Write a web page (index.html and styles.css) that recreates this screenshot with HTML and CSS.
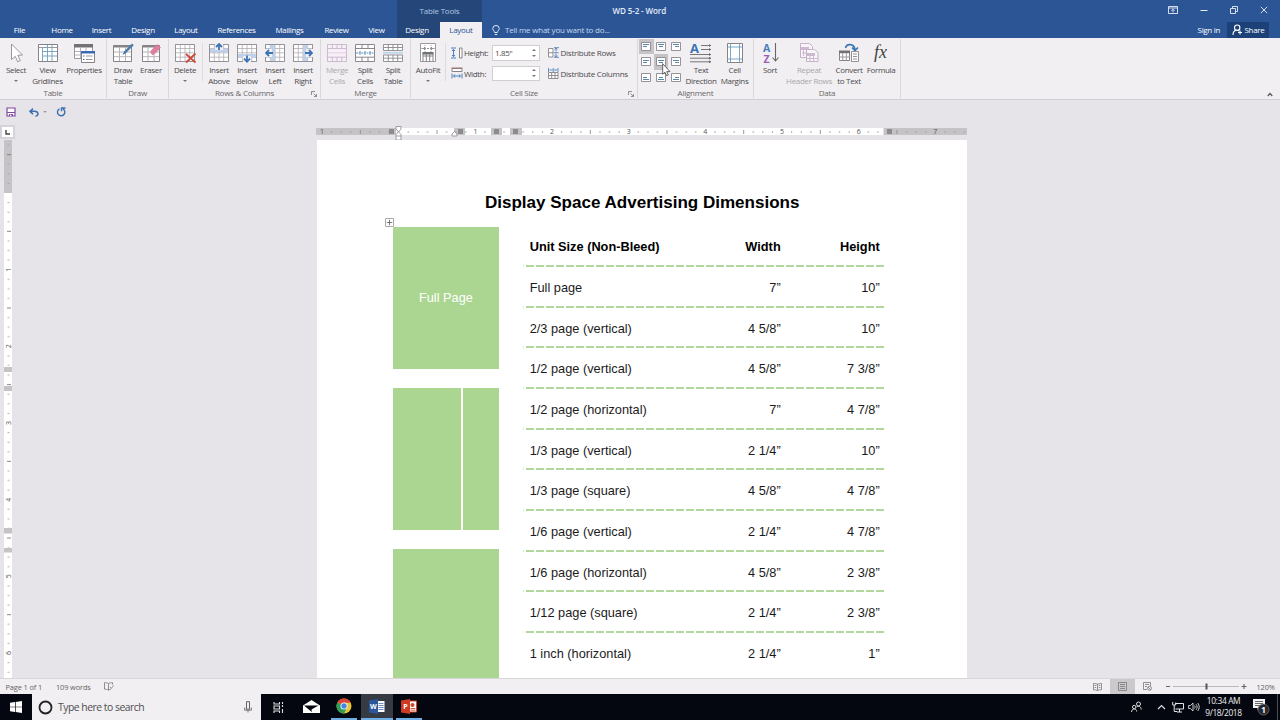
FILE: index.html
```html
<!DOCTYPE html>
<html lang="en">
<head>
<meta charset="UTF-8">
<meta name="viewport" content="width=device-width, initial-scale=1.0">
<title>WD 5-2 - Word</title>
<link rel="stylesheet" href="styles.css">
</head>
<body>

<!-- Shared icon parts -->
<svg class="defs" width="0" height="0">
<symbol id="grid" viewBox="0 0 20 20">
<path d="M.5 1.5h19v17H.5zM.5 5.5h19M.5 9.8h19M.5 14.2h19M5.3 1.5v17M10 1.5v17M14.7 1.5v17" fill="#fff" stroke="#aeacb0" stroke-width=".8"/>
<path d="M.5 1.5h19v17H.5z" fill="none" stroke="#959397"/>
</symbol>
<symbol id="launcher" viewBox="0 0 6 6"><path d="M.5 4V.5H4M2.5 2.5l3 3M5.5 3v2.5H3" fill="none" stroke="#777" stroke-width=".8"/></symbol>
</svg>

<!-- Title bar -->
<div class="titlebar">
<div class="context-title">Table Tools</div>
<div class="doc-name">WD 5-2 - Word</div>
<div class="window-buttons">
<svg width="10" height="8"><path d="M.5.5h9v7h-9zM.5 2h9M5 6.5V3.2M3.4 4.8L5 3.2l1.6 1.6" fill="none" stroke="#e6edf7" stroke-width=".9"/></svg>
<svg width="8" height="8"><path d="M.5 4.5h7" stroke="#e6edf7"/></svg>
<svg width="8" height="8"><path d="M.5 2.5h5v5h-5zM2.5 2.5v-2h5v5h-2" fill="none" stroke="#e6edf7" stroke-width=".9"/></svg>
<svg width="8" height="8"><path d="M.8.8l6.4 6.4M7.2.8L.8 7.2" stroke="#e6edf7" stroke-width=".9"/></svg>
</div>
</div>

<!-- Ribbon tabs -->
<div class="tabs">
<div class="tab tab-file">File</div>
<div class="tab tab-home">Home</div>
<div class="tab tab-insert">Insert</div>
<div class="tab tab-design">Design</div>
<div class="tab tab-layout">Layout</div>
<div class="tab tab-references">References</div>
<div class="tab tab-mailings">Mailings</div>
<div class="tab tab-review">Review</div>
<div class="tab tab-view">View</div>
<div class="tab tab-context">Design</div>
<div class="tab tab-active">Layout</div>
<div class="tell-me">
<svg width="8" height="11" viewBox="0 0 8 11"><path d="M2.6 7.5C2.6 6 .8 5.3.8 3.5a3.2 3 0 0 1 6.4 0C7.2 5.3 5.4 6 5.4 7.5zM2.8 9.5h2.4" fill="none" stroke="#dfe8f5" stroke-width="1"/></svg>
<span>Tell me what you want to do...</span>
</div>
<div class="sign-in">Sign in</div>
<div class="share">
<svg width="11" height="12" viewBox="0 0 11 12"><path d="M1 11c0-3 1.5-4.5 3.3-4.7M6 6.3l1 .8M8 6.5v4M6 8.5h4" fill="none" stroke="#fff" stroke-width="1.1"/><circle cx="5.2" cy="3.7" r="2.7" fill="none" stroke="#fff" stroke-width="1.1"/></svg>
<span>Share</span>
</div>
</div>

<!-- Ribbon -->
<div class="ribbon">

<div class="group group-table">
<div class="tools">
<div class="tool w32"><svg width="20" height="20"><path d="M5.5 1v15.5l3.7-3.2 2.5 5.5 2.6-1.2-2.4-5.3 4.6-.3z" fill="#fff" stroke="#808080" stroke-width=".8"/></svg><span>Select</span><i class="caret"></i></div>
<div class="tool w31"><svg width="20" height="20"><path d="M.5 1.5h19v17H.5z" fill="#fff" stroke="#858387"/><path d="M1 4.5h18" stroke="#9c9a9e"/><path d="M4.5 5v13.5M9.5 2v16.5M14 2v16.5M4 8.5h15M4 13h15" stroke="#6d9dc0" stroke-width=".9"/></svg><span>View<br>Gridlines</span></div>
<div class="tool w42"><svg width="22" height="20"><path d="M1.5 1.5h18v14h-18z" fill="#fff" stroke="#9a989b"/><path d="M1 1h19v3.5H1z" fill="#737174"/><path d="M2 8.5h17M2 12h17M7.5 4v11M13 4v11" stroke="#b5b3b6"/><path d="M8.5 8.5h13v11h-13z" fill="#fff" stroke="#858387"/><path d="M8 8h14v2.5H8z" fill="#3a6cb5"/><path d="M10 13h1.5M10 16.5h1.5" stroke="#3a6cb5"/><path d="M13 13h6.5M13 16.5h6.5" stroke="#999"/></svg><span>Properties</span></div>
</div>
<div class="group-name">Table</div>
</div>

<div class="group group-draw">
<div class="tools">
<div class="tool w28"><svg width="22" height="20"><path d="M1.5 2.5h18v16h-18z" fill="#fff" stroke="#858387"/><path d="M1.5 2.5h18v2h-18z" fill="#858387"/><path d="M2 9h17M2 13.7h17M7.5 4v14M13.5 4v14" stroke="#b5b3b6"/><path d="M10.5 12l1.5-3.5 8-8 1.8 1.8-8 8z" fill="#4c7dad"/></svg><span>Draw<br>Table</span></div>
<div class="tool w28"><svg width="20" height="20"><path d="M1.5 2.5h17v16h-17z" fill="#fff" stroke="#858387"/><path d="M1.5 2.5h17v2h-17z" fill="#858387"/><path d="M2 9h16M2 13.7h16M7 4v14M13 12v6" stroke="#b5b3b6"/><path d="M9.5 8.5l6.5-7 3.5 3-6.5 7h-2z" fill="#e07f9c" stroke="#d0708e" stroke-width=".6"/></svg><span>Eraser</span></div>
</div>
<div class="group-name">Draw</div>
</div>

<div class="group group-rows">
<div class="tools">
<div class="tool w28"><svg width="20" height="20" class="spill"><use href="#grid" width="20" height="20"/><path d="M11 11l9.5 8.5M20.5 10.5l-9.5 9" stroke="#cf4a3c" stroke-width="1.8"/></svg><span>Delete</span><i class="caret"></i></div>
<div class="divider"></div>
<div class="tool w28"><svg width="20" height="20"><use href="#grid" width="20" height="20"/><path d="M1 5.5h18v4H1z" fill="#bfd0ea"/><path d="M6 0h8v7H6z" fill="#f1eff2"/><path d="M10 7V1M7 4l3-3 3 3" fill="none" stroke="#3d74b5" stroke-width="1.8"/></svg><span>Insert<br>Above</span></div>
<div class="tool w28"><svg width="20" height="20"><use href="#grid" width="20" height="20"/><path d="M1 11h18v4H1z" fill="#bfd0ea"/><path d="M6 13h8v7H6z" fill="#f1eff2"/><path d="M10 12.5v6M7 15.7l3 3 3-3" fill="none" stroke="#3d74b5" stroke-width="1.8"/></svg><span>Insert<br>Below</span></div>
<div class="tool w28"><svg width="20" height="20"><use href="#grid" width="20" height="20"/><path d="M5.5 2h4.5v16H5.5z" fill="#bfd0ea"/><path d="M0 6h7v8H0z" fill="#f1eff2"/><path d="M8 10H1.2M4 7l-3 3 3 3" fill="none" stroke="#3d74b5" stroke-width="1.8"/></svg><span>Insert<br>Left</span></div>
<div class="tool w28"><svg width="20" height="20"><use href="#grid" width="20" height="20"/><path d="M10 2h4.5v16H10z" fill="#bfd0ea"/><path d="M13 6h7v8h-7z" fill="#f1eff2"/><path d="M12 10h6.8M16 7l3 3-3 3" fill="none" stroke="#3d74b5" stroke-width="1.8"/></svg><span>Insert<br>Right</span></div>
</div>
<div class="group-name">Rows &amp; Columns</div>
<svg class="launcher" width="6" height="6"><use href="#launcher"/></svg>
</div>

<div class="group group-merge">
<div class="tools">
<div class="tool w28 disabled"><svg width="20" height="20"><path d="M.5 1.5h19v17H.5zM.5 5.5h19M.5 14.2h19M5.3 1.5v4M10 1.5v4M14.7 1.5v4M5.3 14v4M10 14v4M14.7 14v4" fill="#f6eff6" stroke="#cdb9d1"/><path d="M.5 9.8h19" stroke="#e3cfe6"/></svg><span>Merge<br>Cells</span></div>
<div class="tool w28"><svg width="20" height="20"><path d="M.5 1.5h19v17H.5zM.5 5.5h19M.5 14.2h19M7 1.5v4M13 1.5v4M7 14v4M13 14v4" fill="#fff" stroke="#8a888c"/><path d="M5 8v4M10 8v4M15 8v4M1 10h18" stroke="#5b94bd" stroke-dasharray="2 .6"/></svg><span>Split<br>Cells</span></div>
<div class="tool w28"><svg width="20" height="20"><path d="M.5 1.5h19v6H.5zM.5 12h19v6.5H.5zM.5 4.5h19M.5 15.2h19M5.3 1.5v6M10 1.5v6M14.7 1.5v6M5.3 12v6.5M10 12v6.5M14.7 12v6.5" fill="#fff" stroke="#8a888c" stroke-width=".9"/><path d="M0 9.8h20" stroke="#b6d3ea" stroke-width="1.5"/></svg><span>Split<br>Table</span></div>
</div>
<div class="group-name">Merge</div>
</div>

<div class="group group-size">
<div class="tools">
<div class="tool w30"><svg width="20" height="20"><path d="M2.5.5h15v18h-15z" fill="#fff" stroke="#9a989b"/><path d="M7 2v7M13 2v7" stroke="#aaa" stroke-dasharray="1 1"/><path d="M3.5 5.5h4M6 4l1.5 1.5L6 7M16.5 5.5h-4M14 4l-1.5 1.5L14 7M9 5.5h2" fill="none" stroke="#777" stroke-width=".8"/><path d="M5 10h10v8.5M5 10v8.5M5 13h10M8.3 10v8.5M11.7 10v8.5" fill="none" stroke="#858387"/><path d="M4.5 9h11v2.5h-11z" fill="#737174"/></svg><span>AutoFit</span><i class="caret"></i></div>
<div class="divider divider-size"></div>
<div class="size-fields">
<div class="field"><svg width="12" height="12"><path d="M0 1h5M0 11h5M2.5 2.5v7M1 4l1.5-1.7L4 4M1 8l1.5 1.7L4 8" fill="none" stroke="#3d74b5" stroke-width=".9"/><path d="M8.5 1h2.5v10H8.5z" fill="#fff" stroke="#858387"/></svg><span class="field-name">Height:</span><div class="spinner"><span>1.85"</span><b class="arrows"><i class="up"></i><i class="down"></i></b></div></div>
<div class="field"><svg width="12" height="12"><path d="M1 1.5h10v3H1z" fill="#fff" stroke="#858387"/><path d="M.5 1h11" stroke="#a07070"/><path d="M1 6.5v5M11 6.5v5M2.5 9h7M4.2 7.5L2.5 9l1.7 1.5M7.8 7.5L9.5 9l-1.7 1.5" fill="none" stroke="#3d74b5" stroke-width=".9"/></svg><span class="field-name">Width:</span><div class="spinner"><span></span><b class="arrows"><i class="up"></i><i class="down"></i></b></div></div>
</div>
<div class="distribute">
<div class="dist-item"><svg width="11" height="11"><path d="M.5 1.5h4.5v8.5H.5zM.5 5.7H5" fill="#fff" stroke="#858387" stroke-width=".9"/><path d="M8 1v3.5M6.8 2.5L8 1.2l1.2 1.3M8 10V6.5M6.8 8.5L8 9.8l1.2-1.3M6 5.7h4.5M6 .7h5M6 10.3h5" fill="none" stroke="#3d74b5" stroke-width=".8"/></svg>Distribute Rows</div>
<div class="dist-item"><svg width="11" height="11"><path d="M.5 4.5h9.5v6H.5zM3.7 4.5v6M7 4.5v6M.5 7.5H10" fill="#fff" stroke="#858387" stroke-width=".9"/><path d="M.5 0v4M10 0v4M5.2 0v4M1.5 2h3M6 2h3" stroke="#3d74b5" stroke-width=".8"/></svg>Distribute Columns</div>
</div>
</div>
<div class="group-name">Cell Size</div>
<svg class="launcher" width="6" height="6"><use href="#launcher"/></svg>
</div>

<div class="group group-align">
<div class="tools">
<div class="align-grid">
<div class="align-btn selected"><svg width="10" height="9"><path d="M.5.5h9v8h-9z" fill="#fff" stroke="#8a888c" stroke-width=".9"/><path d="M2 2.5h6M2 4.5h4" stroke="#5a87a5"/></svg></div>
<div class="align-btn"><svg width="10" height="9"><path d="M.5.5h9v8h-9z" fill="#fff" stroke="#8a888c" stroke-width=".9"/><path d="M2 2.5h6M3 4.5h4" stroke="#5a87a5"/></svg></div>
<div class="align-btn"><svg width="10" height="9"><path d="M.5.5h9v8h-9z" fill="#fff" stroke="#8a888c" stroke-width=".9"/><path d="M2 2.5h6M4 4.5h4" stroke="#5a87a5"/></svg></div>
<div class="align-btn"><svg width="10" height="9"><path d="M.5.5h9v8h-9z" fill="#fff" stroke="#8a888c" stroke-width=".9"/><path d="M2 3.5h6M2 5.5h4" stroke="#5a87a5"/></svg></div>
<div class="align-btn selected"><svg width="10" height="9"><path d="M.5.5h9v8h-9z" fill="#fff" stroke="#8a888c" stroke-width=".9"/><path d="M2 3.5h6M3 5.5h4" stroke="#5a87a5"/></svg>
<svg class="cursor" width="9" height="14"><path d="M.7.7v10.5l2.3-2 1.6 3.5 1.7-.8-1.6-3.3h3.3z" fill="#fff" stroke="#444" stroke-width=".8"/></svg></div>
<div class="align-btn"><svg width="10" height="9"><path d="M.5.5h9v8h-9z" fill="#fff" stroke="#8a888c" stroke-width=".9"/><path d="M2 3.5h6M4 5.5h4" stroke="#5a87a5"/></svg></div>
<div class="align-btn"><svg width="10" height="9"><path d="M.5.5h9v8h-9z" fill="#fff" stroke="#8a888c" stroke-width=".9"/><path d="M2 4.5h4M2 6.5h6" stroke="#5a87a5"/></svg></div>
<div class="align-btn"><svg width="10" height="9"><path d="M.5.5h9v8h-9z" fill="#fff" stroke="#8a888c" stroke-width=".9"/><path d="M3 4.5h4M2 6.5h6" stroke="#5a87a5"/></svg></div>
<div class="align-btn"><svg width="10" height="9"><path d="M.5.5h9v8h-9z" fill="#fff" stroke="#8a888c" stroke-width=".9"/><path d="M4 4.5h4M2 6.5h6" stroke="#5a87a5"/></svg></div>
</div>
<div class="tool w34"><svg width="22" height="20" class="spill"><text x="0" y="9.5" class="letter-a">A</text><path d="M11 2.5h10M11 6.5h10M0 11.5h21M0 15.2h21M0 18.8h21" stroke="#68666a" stroke-width=".9"/><path d="M19 1l2 1.5L19 4zM19 5l2 1.5L19 8zM19 10l2 1.5-2 1.5zM19 13.7l2 1.5-2 1.5zM19 17.3l2 1.5-2 1.5z" fill="#68666a"/></svg><span>Text<br>Direction</span></div>
<div class="tool w33"><svg width="16" height="20"><path d="M.5.5h15v19H.5z" fill="#fff" stroke="#858387"/><path d="M3.5.5v19M12.5.5v19M.5 4h15M.5 16h15" stroke="#6d9dc0" stroke-width=".9"/></svg><span>Cell<br>Margins</span></div>
</div>
<div class="group-name">Alignment</div>
</div>

<div class="group group-data">
<div class="tools">
<div class="tool w28"><svg width="18" height="20" class="spill"><text x="2" y="9" class="sort-a">A</text><text x="2.5" y="19.5" class="sort-z">Z</text><path d="M14.5 0v18M11.5 14.5l3 3.5 3-3.5" fill="none" stroke="#68666a" stroke-width="1.1"/></svg><span>Sort</span></div>
<div class="tool w50 disabled"><svg width="20" height="20"><path d="M1.5.5h9l3 3v11h-12z" fill="#f8f4f8" stroke="#c5b2ca"/><path d="M2 4h8v3H2z" fill="#cdb9d1"/><path d="M4.5 4v9M7.5 4v9M3 10h7" stroke="#cdb9d1"/><path d="M7.5 6.5h8l3.5 3v9H7.5z" fill="#f8f4f8" stroke="#c5b2ca"/><path d="M8 10h8v3H8z" fill="#cdb9d1"/><path d="M11 10v8M14.5 10v8M8 15.5h11" stroke="#cdb9d1"/></svg><span>Repeat<br>Header Rows</span></div>
<div class="tool w30"><svg width="20" height="20"><path d="M6.5 5c1-4.5 8.5-5 9.5 1.5M13 4.5l3 3 3-3" fill="none" stroke="#3d74b5" stroke-width="1.6"/><path d="M.5 8.5h10v9H.5z" fill="#fff" stroke="#858387"/><path d="M0 7.5h11v2.7H0z" fill="#737174"/><path d="M3.7 10v7.5M7.3 10v7.5M.5 14h10" stroke="#999"/><path d="M12.5 8.5h7v10h-7zM14 11h4M14 13.5h4M14 16h4" fill="#fff" stroke="#858387" stroke-width=".9"/></svg><span>Convert<br>to Text</span></div>
<div class="tool w34"><svg width="20" height="20" class="spill"><text x="3" y="15" class="fx">fx</text></svg><span>Formula</span></div>
</div>
<div class="group-name">Data</div>
</div>

<svg class="collapse" width="6" height="5"><path d="M.7 4L3 1.5 5.3 4" fill="none" stroke="#555" stroke-width="1.2"/></svg>
</div>

<!-- Quick access -->
<div class="quick">
<svg width="10" height="10"><path d="M1 1h8v8H1z" fill="#fff" stroke="#8249a3" stroke-width="1.2"/><path d="M1 5h8v1H1zM3 7h4v2H3z" fill="#8249a3"/><path d="M4 7.5h1.3V9H4z" fill="#fff"/></svg>
<svg class="undo" width="10" height="9"><path d="M4 .6L1 3.3l3 2.8M1.2 3.3h4.5c4 0 4.3 4.6.8 4.9" fill="none" stroke="#3d6fb0" stroke-width="1.5"/></svg>
<i class="caret small"></i>
<svg class="redo" width="10" height="10"><path d="M3.5 1.8A3.7 3.7 0 1 0 7 1.9M5.5 4.3V1h4" fill="none" stroke="#3d6fb0" stroke-width="1.4"/></svg>
</div>

<!-- Horizontal ruler -->
<div class="ruler-row">
<div class="tab-stop"><svg width="5" height="5"><path d="M1 0v4h4" fill="none" stroke="#444" stroke-width="1.4"/></svg></div>
<svg class="ruler-h" width="651" height="16">
<defs><pattern id="ticks" x="6" y="0" width="76.67" height="16" patternUnits="userSpaceOnUse">
<path d="M9.6 6v2M19.2 6v2M28.8 6v2M47.9 6v2M57.5 6v2M67.1 6v2" stroke="#a5a3a6" stroke-width=".9"/><path d="M38.3 5v4" stroke="#8b898c" stroke-width=".9"/>
</pattern></defs>
<path d="M0 3h651v7H0z" fill="#fff"/>
<path d="M0 3h80v7H0zM138 3h11v7h-11zM175 3h11v7h-11zM194 3h12v7h-12zM567.5 3H651v7h-83.5z" fill="#c5c3c6"/>
<path d="M0 3h651v7H0z" fill="url(#ticks)"/>
<path d="M73 4h5v5h-5zM142 4h5v5h-5zM178 4h5v5h-5zM197 4h5v5h-5zM571 4h5v5h-5z" fill="#8d8b8e"/>
<g class="ruler-num"><text x="6" y="9">1</text><text x="159.5" y="9">1</text><text x="236" y="9">2</text><text x="312.7" y="9">3</text><text x="389.3" y="9">4</text><text x="466" y="9">5</text><text x="542.7" y="9">6</text><text x="619.3" y="9">7</text></g>
<path d="M80 1.500h5v2.500l-2.500 3-2.500-3zM80 10.500V9.500l2.500-2.700L85 9.500v5.500h-5zM80 11h5M136 11V9l2.500-2.500L141 9v2z" fill="#fff" stroke="#8b898c" stroke-width=".8"/>
</svg>
</div>

<!-- Document area -->
<div class="workspace">
<svg class="ruler-v" width="8" height="539">
<defs><pattern id="vticks" x="0" y="53" width="8" height="76.67" patternUnits="userSpaceOnUse">
<path d="M3.5 9.6h2M3.5 19.2h2M3.5 28.8h2M3.5 47.9h2M3.5 57.5h2M3.5 67.1h2" stroke="#a5a3a6" stroke-width=".9"/><path d="M3 38.3h4" stroke="#777" stroke-width=".9"/>
</pattern></defs>
<path d="M0 0h8v539H0z" fill="#fff"/>
<path d="M0 0h8v53H0zM0 227h8v5H0zM0 246h8v5H0zM0 388h8v5.5H0zM0 408h8v4.5H0z" fill="#c5c3c6"/>
<path d="M0 0h8v226H0zM0 232h8v14H0zM0 251h8v137H0zM0 394h8v14H0zM0 413h8v126H0z" fill="url(#vticks)"/>
<g class="ruler-num"><text transform="translate(6.5 129.7) rotate(-90)">1</text><text transform="translate(6.5 206.3) rotate(-90)">2</text><text transform="translate(6.5 283) rotate(-90)">3</text><text transform="translate(6.5 359.7) rotate(-90)">4</text><text transform="translate(6.5 436.3) rotate(-90)">5</text><text transform="translate(6.5 513) rotate(-90)">6</text></g>
</svg>

<div class="page">
<h1>Display Space Advertising Dimensions</h1>
<div class="content">
<svg class="move-handle" width="9" height="9"><path d="M.5.5h8v8h-8z" fill="#fff" stroke="#aaa"/><path d="M4.5 1.8v5.4M1.8 4.5h5.4" stroke="#666" stroke-width=".9"/></svg>
<div class="samples">
<div class="sample full">Full Page</div>
<div class="split"><div class="sample two-thirds"></div><div class="sample one-third"></div></div>
<div class="sample last"></div>
</div>
<div class="sizes">
<div class="row head"><span>Unit Size (Non-Bleed)</span><span>Width</span><span>Height</span></div>
<div class="row"><span>Full page</span><span>7”</span><span>10”</span></div>
<div class="row"><span>2/3 page (vertical)</span><span>4 5/8”</span><span>10”</span></div>
<div class="row"><span>1/2 page (vertical)</span><span>4 5/8”</span><span>7 3/8”</span></div>
<div class="row"><span>1/2 page (horizontal)</span><span>7”</span><span>4 7/8”</span></div>
<div class="row"><span>1/3 page (vertical)</span><span>2 1/4”</span><span>10”</span></div>
<div class="row"><span>1/3 page (square)</span><span>4 5/8”</span><span>4 7/8”</span></div>
<div class="row"><span>1/6 page (vertical)</span><span>2 1/4”</span><span>4 7/8”</span></div>
<div class="row"><span>1/6 page (horizontal)</span><span>4 5/8”</span><span>2 3/8”</span></div>
<div class="row"><span>1/12 page (square)</span><span>2 1/4”</span><span>2 3/8”</span></div>
<div class="row"><span>1 inch (horizontal)</span><span>2 1/4”</span><span>1”</span></div>
</div>
</div>
</div>
</div>

<!-- Status bar -->
<div class="status">
<span class="pages">Page 1 of 1</span>
<span class="words">109 words</span>
<svg width="10" height="9"><path d="M4.5 1.5C3 .7 2 .7.5.7v6.5c1.5 0 2.5 0 4 1zM4.5 1.5C6 .7 7 .7 8.5.7v2M4.5 8.2c1-.7 1.5-.9 2.3-1M6 5l1.2 1.5L9.5 3.5" fill="none" stroke="#777" stroke-width=".8"/></svg>
<div class="views">
<div class="view"><svg width="9" height="8"><path d="M4.5 1.2C3 .5 2 .5.5.5v6.3c1.500 0 2.500 0 4 .7 1.500-.7 2.500-.7 4-.7V.5c-1.500 0-2.500 0-4 .7zM4.500 1v6.500M1.700 2.500h1.500M1.700 4.500h1.500M5.800 2.500h1.500M5.800 4.500h1.500" fill="none" stroke="#777" stroke-width=".8"/></svg></div>
<div class="view current"><svg width="9" height="9"><path d="M.5.5h8v8h-8zM2 2.5h5M2 4.5h5M2 6.5h5" fill="none" stroke="#777" stroke-width=".8"/></svg></div>
<div class="view web"><svg width="9" height="9"><path d="M4 7.5H.5v-7h7V4M2 2.5h4M2 4.5h2" fill="none" stroke="#777" stroke-width=".8"/><circle cx="6.5" cy="6.3" r="2" fill="none" stroke="#777" stroke-width=".8"/><path d="M5 5l3 3" stroke="#777" stroke-width=".8"/></svg></div>
</div>
<svg class="zoom" width="80" height="9"><path d="M0 4.5h4M75.5 4.5h5M78 2v5" stroke="#666" stroke-width="1.1"/><path d="M7 4.5h66" stroke="#bbb"/><path d="M39.5 1.5h2v6h-2z" fill="#555"/></svg>
<span class="percent">120%</span>
</div>

<!-- Taskbar -->
<div class="taskbar">
<div class="start"><svg width="12" height="12"><path d="M0 1.7l5-.7v4.7H0zM5.700.9L12 0v5.700H5.700zM0 6.300h5V11l-5-.7zM5.700 6.300H12V12l-6.300-.9z" fill="#fff"/></svg></div>
<div class="search">
<svg width="15" height="15"><circle cx="7.5" cy="7.5" r="6" fill="none" stroke="#222" stroke-width="1.8"/></svg>
<span>Type here to search</span>
<svg class="mic" width="8" height="12"><path d="M2.5.7h3v7.5h-3z" fill="none" stroke="#555" stroke-width=".9"/><path d="M.7 6.5v2.7h6.6V6.5M4 9.5v2" fill="none" stroke="#555" stroke-width=".8"/></svg>
</div>
<div class="task"><svg width="11" height="11"><path d="M1 0v2h5.5V0M1 11V9h5.5v2M1 4h5.5v3H1zM9.5 0v2M9.5 3v2M9.5 7v4" fill="none" stroke="#ddd" stroke-width="1.1"/></svg></div>
<div class="task"><svg width="17" height="14"><path d="M0 5.5L8.5 0 17 5.5V13H0z" fill="#fff"/><path d="M1 5.5h14.5L8.5 9.500 8.800 12z" fill="#04070f"/></svg></div>
<div class="task running"><svg width="16" height="16" viewBox="0 0 16 16"><circle cx="8" cy="8" r="7.5" fill="#e8c533"/><path d="M8 8L1.5 4.25A7.5 7.5 0 0 0 8 15.5L11 9.5z" fill="#2d9d58"/><path d="M8 8L1.5 4.25A7.5 7.5 0 0 1 14.5 4.25L14.7 4.8H8z" fill="#db4437"/><circle cx="8" cy="8" r="3.5" fill="#fff"/><circle cx="8" cy="8" r="2.7" fill="#4285e8"/></svg></div>
<div class="task running focused"><svg width="16" height="15"><path d="M7 2h8.5v11H7z" fill="#fff"/><path d="M9.5 4.5h5M9.5 6.5h5M9.5 8.5h5M9.5 10.5h5" stroke="#5b7fba" stroke-width=".9"/><path d="M0 1.5L9 0v15l-9-1.5z" fill="#2b579a"/><text x="4.5" y="10" class="app-letter">W</text></svg></div>
<div class="task running"><svg width="16" height="15"><path d="M7 2h8.5v11H7z" fill="#fff" stroke="#d04526"/><circle cx="11.5" cy="6" r="2" fill="#d04526"/><path d="M9.5 9.5h5M9.5 11.2h5" stroke="#d04526" stroke-width=".9"/><path d="M0 1.5L9 0v15l-9-1.5z" fill="#cf3a22"/><text x="4.5" y="10" class="app-letter">P</text></svg></div>
<div class="tray">
<svg class="people" width="11" height="12"><circle cx="7.5" cy="3" r="2" fill="none" stroke="#ddd"/><circle cx="3.2" cy="6" r="1.7" fill="none" stroke="#ddd"/><path d="M.6 11c0-2 1-3 2.6-3s2.3.8 2.5 2.5M5.5 6c2-1.5 4.7-.5 4.7 2.5" fill="none" stroke="#ddd"/></svg>
<svg class="chevron" width="9" height="6"><path d="M1 5l3.5-3.5L8 5" fill="none" stroke="#ddd" stroke-width="1.2"/></svg>
<svg class="network" width="12" height="11"><path d="M3.5 1.5h8v5.5h-8M5 10h5M7.5 7v3M.7 0v3h3V.5M2.2 3v6.5H5" fill="none" stroke="#e5e5e5"/></svg>
<svg class="volume" width="12" height="10"><path d="M.6 3.5h1.8L5 1v8L2.4 6.5H.6zM6.5 3.5c.8 1 .8 2 0 3M8 2.2c1.5 1.7 1.5 4 0 5.6M9.7 1c2 2.5 2 5.5 0 8" fill="none" stroke="#ddd" stroke-width=".9"/></svg>
<div class="clock">10:34 AM<br>9/18/2018</div>
<svg class="notice" width="18" height="18"><path d="M0 1h12v9H6.5L4.5 12v-2H0z" fill="#f3f3f3"/><path d="M2 3.5h8M2 5.5h8M2 7.5h6" stroke="#444" stroke-width=".8"/><circle cx="10.5" cy="11.5" r="5.5" fill="#25282e" stroke="#777" stroke-width=".7"/><text x="10.5" y="14.5" class="badge">1</text></svg>
<div class="show-desktop"></div>
</div>
</div>

</body>
</html>
```
FILE: styles.css
```css
* {
box-sizing: border-box;
}

body {
margin: 0;
width: 1280px;
height: 720px;
overflow: hidden;
display: flex;
flex-direction: column;
background: #e6e4e8;
font-family: "Open Sans", "Noto Sans", sans-serif;
font-size: 8px;
letter-spacing: -.32px;
color: #4b494c;
white-space: nowrap;
}

svg {
display: block;
flex: none;
letter-spacing: 0;
}

.defs {
position: absolute;
}

.spill {
overflow: visible;
}

/* Title bar */
.titlebar {
display: flex;
height: 22px;
flex: none;
background: #2c5596;
color: #fff;
padding-left: 397px;
}

.context-title {
width: 85px;
line-height: 22px;
background: #244678;
color: #b3c6e3;
text-align: center;
letter-spacing: -.22px;
}

.doc-name {
margin-left: 130.5px;
line-height: 22px;
font-size: 8px;
font-weight: 600;
letter-spacing: -.1px;
color: #e4ecf7;
}

.window-buttons {
margin: 6px 12px 0 auto;
display: flex;
gap: 22px;
}

/* Tabs */
.tabs {
display: flex;
height: 16px;
flex: none;
background: #2c5596;
color: #fff;
line-height: 16px;
text-align: center;
font-weight: 500;
}

.tab-file { width: 39px; }
.tab-home { width: 46px; }
.tab-insert { width: 33px; }
.tab-design { width: 50px; }
.tab-layout { width: 36px; }
.tab-references { width: 65px; }
.tab-mailings { width: 41px; }
.tab-review { width: 53px; }
.tab-view { width: 27px; }

.tab-context {
width: 43px;
margin-left: 7px;
padding-right: 3px;
background: #244678;
}

.tab-active {
width: 42px;
background: #f1eff2;
color: #2c5596;
}

.tell-me {
display: flex;
align-items: center;
gap: 5px;
margin-left: 10px;
color: #c7d7ee;
letter-spacing: -.22px;
}

.sign-in {
margin-left: auto;
margin-right: 7px;
}

.share {
display: flex;
align-items: center;
justify-content: center;
gap: 2px;
width: 42px;
margin-right: 11px;
background: #1c4179;
}

/* Ribbon */
.ribbon {
position: relative;
display: flex;
height: 62px;
flex: none;
background: #f1eff2;
border-bottom: 1px solid #d0ced2;
}

.group {
position: relative;
display: flex;
flex-direction: column;
height: 59px;
margin-top: 1px;
border-right: 1px solid #d9d7da;
}

.group-table { width: 107px; }
.group-draw { width: 62px; }
.group-rows { width: 152px; }
.group-merge { width: 90px; }
.group-size { width: 227px; }
.group-align { width: 116px; }
.group-data { width: 147px; }

.tools {
display: flex;
padding: 4px 0 0 2px;
height: 49px;
}

.group-table .tools {
padding-left: 0;
}

.tool {
display: flex;
flex-direction: column;
align-items: center;
text-align: center;
line-height: 10.6px;
flex: none;
}

.tool svg {
margin-bottom: 2px;
}

.w28 { width: 28px; }
.w30 { width: 30px; }
.w31 { width: 31px; }
.w32 { width: 32px; }
.w33 { width: 33px; }
.w34 { width: 34px; }
.w42 { width: 42px; }
.w50 { width: 50px; }

.disabled {
color: #aaa8ab;
}

.caret {
width: 0;
height: 0;
margin-top: 4px;
border: 2px solid transparent;
border-top-color: #777;
border-bottom: 0;
}

.divider {
width: 1px;
height: 38px;
margin: 0 2px 0 3px;
background: #dddbde;
}

.divider-size {
margin: 0 3px 0 2px;
}

.group-name {
height: 11px;
margin-top: 1px;
line-height: 12px;
text-align: center;
letter-spacing: -.25px;
color: #69676a;
}

.launcher {
position: absolute;
right: 3px;
bottom: 1px;
}

/* Cell size */
.size-fields {
display: flex;
flex-direction: column;
gap: 5px;
margin: 2px 0 0 2px;
}

.field {
display: flex;
align-items: center;
height: 15.5px;
}

.field-name {
width: 28px;
margin-left: 1px;
}

.spinner {
display: flex;
justify-content: space-between;
align-items: center;
width: 47.5px;
height: 15.5px;
padding: 0 3px 0 2px;
background: #fff;
border: 1px solid #d0ced1;
}

.arrows i {
display: block;
border: 2px solid transparent;
}

.arrows .up {
border-top: 0;
border-bottom-color: #777;
margin-bottom: 4px;
}

.arrows .down {
border-bottom: 0;
border-top-color: #777;
}

.distribute {
margin: 2px 0 0 8px;
}

.dist-item {
display: flex;
align-items: center;
gap: 2px;
height: 15.5px;
margin-bottom: 5px;
letter-spacing: -.25px;
}

/* Alignment */
.group-align .tools {
padding: 0 0 0 1px;
}

.group-align .tool {
padding-top: 4px;
}

.align-grid {
display: grid;
grid-template-columns: repeat(3, 14.7px);
grid-template-rows: repeat(3, 15.3px);
height: 46px;
margin-right: 1px;
}

.align-btn {
position: relative;
display: flex;
align-items: center;
justify-content: center;
}

.selected {
background: #c6c3c7;
}

.cursor {
position: absolute;
left: 8px;
top: 9px;
z-index: 2;
}

.letter-a {
font: bold 13px "Open Sans", sans-serif;
fill: #3d74b5;
}

.sort-a {
font: bold 10.5px "Open Sans", sans-serif;
fill: #4a7ebd;
}

.sort-z {
font: bold 10.5px "Open Sans", sans-serif;
fill: #9c5bb5;
}

.fx {
font: italic 18px "Liberation Serif", serif;
fill: #444;
}

.collapse {
position: absolute;
right: 7px;
bottom: 2px;
}

/* Quick access */
.quick {
display: flex;
align-items: center;
height: 25px;
flex: none;
padding: 0 0 1px 6px;
}

.undo {
margin-left: 13px;
}

.small {
margin: 0 0 0 3.5px;
transform: scale(.8);
}

.redo {
margin-left: 9.5px;
}

/* Rulers */
.ruler-row {
display: flex;
height: 15px;
flex: none;
}

.tab-stop {
display: flex;
align-items: center;
justify-content: center;
width: 15px;
height: 14px;
background: #fff;
border: 2px solid #d5d3d7;
}

.ruler-h {
margin-left: 301px;
overflow: visible;
}

.ruler-num {
font-size: 7px;
fill: #555;
text-anchor: middle;
}

.workspace {
display: flex;
height: 539px;
flex: none;
overflow: hidden;
border-bottom: 1px solid #d8d6d9;
}

.ruler-v {
margin-left: 3.5px;
}

/* Document page */
.page {
width: 650px;
height: 560px;
margin-left: 305.7px;
padding-top: 52px;
background: #fff;
font-family: "Liberation Sans", Arial, sans-serif;
font-size: 12.78px;
letter-spacing: 0;
color: #1b1b1b;
}

.page h1 {
margin: 0;
font-size: 17.04px;
line-height: 21px;
text-align: center;
color: #000;
}

.content {
position: relative;
display: flex;
margin-top: 14px;
padding-left: 76px;
}

.move-handle {
position: absolute;
left: 67.5px;
top: -9px;
}

.samples {
display: flex;
flex-direction: column;
gap: 19px;
width: 105.5px;
}

.sample {
background: #abd692;
}

.full {
height: 141.7px;
line-height: 142px;
text-align: center;
color: #fff;
}

.split {
display: flex;
gap: 2.5px;
height: 142px;
}

.two-thirds {
width: 67.5px;
}

.one-third {
flex: 1;
}

.last {
height: 142px;
}

.sizes {
width: 361px;
margin: -.5px 0 0 24px;
}

.row {
display: grid;
grid-template-columns: 150px 101px 99px;
padding-left: 7px;
height: 40.67px;
line-height: 41.4px;
background:
linear-gradient(#dcebd3, #dcebd3) 0 100% / 1px 2px no-repeat,
repeating-linear-gradient(90deg, #b2d79d 0 8px, #fff 8px 10px) 3px 100% / 358px 2px no-repeat;
}

.row span + span {
text-align: right;
}

.row:last-child {
background: none;
}

.head {
font-weight: bold;
color: #000;
line-height: 39.6px;
}

/* Status bar */
.status {
display: flex;
align-items: center;
height: 15px;
flex: none;
padding-left: 5.5px;
background: #f1eff2;
font-size: 7.4px;
letter-spacing: -.12px;
color: #656366;
}

.pages {
width: 50.5px;
}

.words {
width: 48px;
}

.views {
display: flex;
margin-left: auto;
}

.view {
display: flex;
align-items: center;
justify-content: center;
width: 25px;
height: 15px;
}

.current {
background: #cbc9cc;
}

.zoom {
margin: 0 11px 0 5.5px;
overflow: visible;
}

.percent {
width: 23.5px;
}

/* Taskbar */
.taskbar {
display: flex;
height: 26px;
flex: none;
background: #04070f;
}

.start {
display: flex;
align-items: center;
justify-content: center;
width: 32px;
}

.search {
display: flex;
align-items: center;
width: 229px;
padding-left: 6px;
margin-right: 1px;
background: #f1eff2;
font-size: 10.4px;
letter-spacing: -.5px;
color: #504e51;
}

.search span {
margin-left: 5px;
}

.mic {
margin-left: auto;
margin-right: 9px;
}

.task {
display: flex;
align-items: center;
justify-content: center;
width: 26px;
margin-left: 3px;
margin-right: 4px;
}

.running {
border-bottom: 2px solid #70aee6;
}

.focused {
width: 32px;
margin-left: 0;
margin-right: 0;
background: #363a43;
}

.app-letter {
font: bold 7px "Open Sans", sans-serif;
fill: #fff;
text-anchor: middle;
}

.tray {
display: flex;
align-items: center;
margin-left: auto;
color: #eee;
}

.chevron {
margin-left: 15px;
}

.network {
margin-left: 6px;
}

.volume {
margin-left: 4px;
}

.clock {
width: 38px;
margin-left: 5px;
font-size: 8.4px;
letter-spacing: -.35px;
line-height: 12px;
text-align: center;
}

.notice {
margin-left: 10.5px;
margin-right: 6px;
}

.badge {
font: bold 8px "Open Sans", sans-serif;
fill: #fff;
text-anchor: middle;
}

.show-desktop {
width: 3px;
height: 26px;
border-left: 1px solid #4a4d54;
}
```
